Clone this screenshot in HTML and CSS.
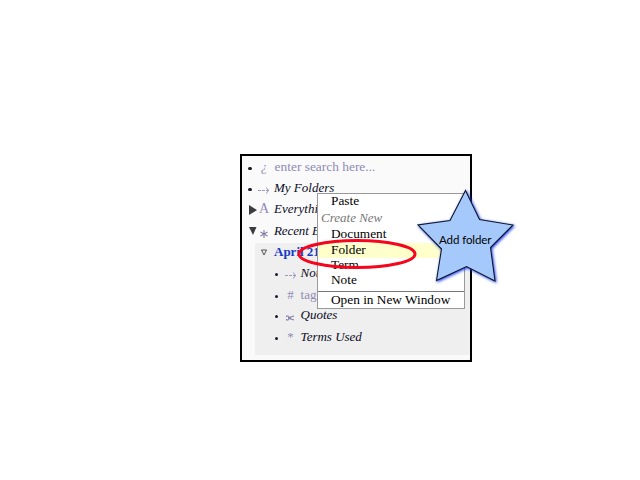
FILE: index.html
```html
<!DOCTYPE html>
<html lang="en">
<head>
<meta charset="utf-8">
<title>Add folder</title>
<link rel="stylesheet" href="styles.css">
</head>
<body>
<main class="window">
  <div class="row"><i class="dot"></i><span class="icon query">¿</span><span class="search wide">enter search here...</span></div>
  <div class="row"><i class="dot"></i><svg class="arrow" viewBox="0 0 12 8"><path d="M0 4.5h3M4 4.5h3M8 4.500h3M8.500 1.500q.5 2.500 2.500 3q-2 .5-2.500 3"/></svg><span class="label">My Folders</span></div>
  <div class="row tall"><svg class="tri" viewBox="0 0 8 10"><path d="M0 0l8 5-8 5z"/></svg><span class="icon letter">A</span><span class="label">Everything</span></div>
  <div class="row"><svg class="tri down" viewBox="0 0 8 10"><path d="M0 1h7.500L4 9z"/></svg><svg class="aster" viewBox="0 0 8 10"><path d="M4 1v8M.5 3l7 4M7.500 3l-7 4"/></svg><span class="label recent">Recent Edits</span></div>
  <section class="panel">
    <div class="row head"><svg class="open" viewBox="0 0 6 7"><path d="M.5 1h5L3 6z"/></svg><b class="date">April 21</b></div>
    <div class="row sub tall"><i class="dot"></i><svg class="arrow" viewBox="0 0 12 8"><path d="M0 4.500h3M4 4.500h3M8 4.500h3M8.500 1.500q.5 2.500 2.500 3q-2 .5-2.500 3"/></svg><span class="label">Notes</span></div>
    <div class="row sub short"><i class="dot"></i><span class="icon">#</span><span class="search">tags</span></div>
    <div class="row sub tall"><i class="dot"></i><svg class="scissors" viewBox="0 0 8 6"><path d="M0 1h2l1 1.500 5-1.500M0 5h2l1-1.500 5 1.500M.5 1v1M.5 4v1M2 3h3"/></svg><span class="label">Quotes</span></div>
    <div class="row sub"><i class="dot"></i><span class="icon">*</span><span class="label">Terms Used</span></div>
  </section>
</main>
<nav class="menu">
  <div class="item">Paste</div>
  <div class="item group">Create New</div>
  <div class="item document">Document</div>
  <div class="item active">Folder</div>
  <div class="item">Term</div>
  <div class="item note">Note</div>
  <div class="item last">Open in New Window</div>
</nav>
<svg class="ring" viewBox="0 0 120 32"><ellipse cx="60" cy="16" rx="58" ry="13.500"/></svg>
<svg class="star" viewBox="410 184 112 106"><path d="M465.500 190.500L479.500 219.500 513 225 490.500 247.500 495 281 466.500 266.500 436.500 280.500 441.500 249 418 225 450 220.500z"/></svg>
<span class="callout">Add folder</span>
</body>
</html>
```

FILE: styles.css
```css
* { box-sizing: border-box; }
body {
  margin: 0;
  width: 640px;
  height: 480px;
  overflow: hidden;
  position: relative;
  padding: 154px 0 0 240px;
  background: #fff;
  font: 13px/21px "Liberation Serif", serif;
  color: #000;
}
.window {
  width: 232px;
  height: 208px;
  border: 2px solid #000;
  background: #fafafa;
  overflow: hidden;
}
.row {
  display: grid;
  grid-template-columns: 14px 16px 1fr;
  column-gap: 1px;
  height: 21px;
  line-height: 21px;
  white-space: nowrap;
}
.row.tall { height: 22px; }
.row.short { height: 20px; }
.dot {
  width: 3.5px;
  height: 3.5px;
  margin: 10.5px 0 0 6px;
  border-radius: 50%;
  background: #1b1b2c;
}
.icon { text-align: center; color: #8f8bb5; }
.query { font-style: italic; padding-right: 2px; }
.letter { font-size: 14px; padding-right: 2px; }
.search { color: #8f8bb5; }
.wide { font-size: 13.4px; }
.label { font-style: italic; color: #0b0b26; }
.wide, .sub .search, .sub .label { padding-left: .6px; }
.recent { letter-spacing: -.1px; }
svg { display: block; fill: none; overflow: visible; }
.arrow { width: 12px; height: 8px; margin: 9px 0 0 1px; stroke: #9a98bc; stroke-width: 1; }
.sub .arrow { margin-left: 2px; }
.tri { width: 8px; height: 10px; margin: 7px 0 0 7px; fill: #3b3b40; }
.tri.down { margin-top: 6px; }
.aster { width: 8px; height: 10px; margin: 9px 0 0 3px; stroke: #8280a9; stroke-width: 1.1; }
.scissors { width: 8px; height: 6px; margin: 11px 0 0 3px; stroke: #8583a8; stroke-width: 1.1; }
.panel {
  width: 215px;
  height: 112px;
  margin: 2px 0 0 13px;
  background: #efefef;
}
.row.head {
  grid-template-columns: 19px 1fr;
  column-gap: 0;
  height: 19px;
  line-height: 18px;
}
.open { width: 6px; height: 7px; margin: 6px 0 0 6px; stroke: #444; stroke-width: .9; }
.date { color: #1239c8; }
.row.sub { grid-template-columns: 27px 16px 1fr; }
.sub .dot { margin-left: 19.5px; }
.sub .icon { padding-right: 1px; }
.menu {
  position: absolute;
  left: 317px;
  top: 193px;
  width: 148px;
  height: 116px;
  border: 1px solid #999;
  background: #fff;
  font-size: 13.3px;
  line-height: 13px;
}
.item { height: 15px; padding-left: 13px; white-space: nowrap; }
.item.group { height: 19px; padding: 2px 0 0 3px; font-size: 13px; font-style: italic; color: #777; }
.item.document { line-height: 11px; }
.item.active { background: #ffc; line-height: 14px; }
.item.note { height: 18px; }
.item.last { border-top: 1px solid #777; height: 17px; line-height: 15px; }
.ring {
  position: absolute;
  left: 297px;
  top: 238px;
  width: 120px;
  height: 32px;
  stroke: #f5061c;
  stroke-width: 3;
}
.star {
  position: absolute;
  left: 410px;
  top: 184px;
  width: 112px;
  height: 106px;
  fill: #a5c9fb;
  stroke: #101828;
  stroke-width: 1.1;
  filter: drop-shadow(1px 1.5px 1.5px #1a3cf0);
}
.callout {
  position: absolute;
  left: 439px;
  top: 232px;
  font: 11.5px/16px Lato, sans-serif;
  letter-spacing: -.08px;
  white-space: nowrap;
}
```
